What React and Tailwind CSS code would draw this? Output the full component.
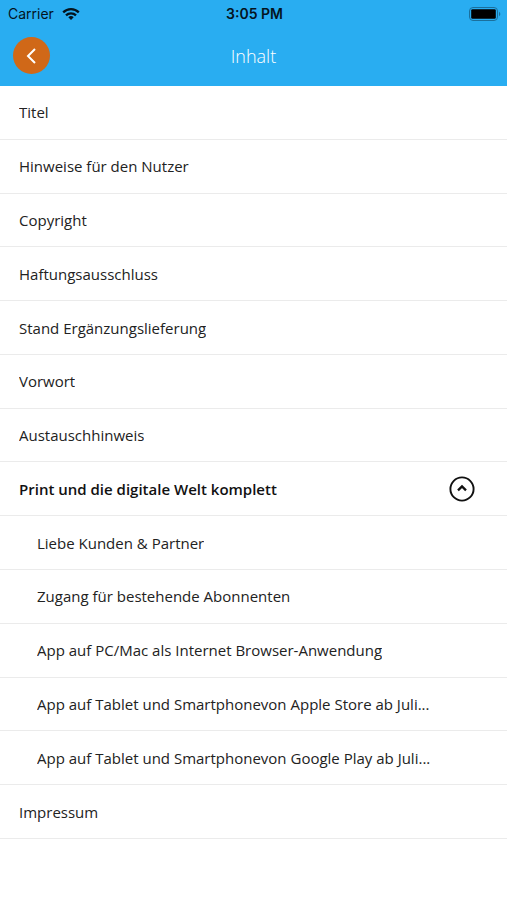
import React, { useState } from "react";

const chapters = [
  { title: "Titel" },
  { title: "Hinweise für den Nutzer" },
  { title: "Copyright" },
  { title: "Haftungsausschluss" },
  { title: "Stand Ergänzungslieferung" },
  { title: "Vorwort" },
  { title: "Austauschhinweis" },
  {
    title: "Print und die digitale Welt komplett",
    children: [
      "Liebe Kunden & Partner",
      "Zugang für bestehende Abonnenten",
      "App auf PC/Mac als Internet Browser-Anwendung",
      "App auf Tablet und Smartphonevon Apple Store ab Juli...",
      "App auf Tablet und Smartphonevon Google Play ab Juli...",
    ],
  },
  { title: "Impressum" },
];

function WifiIcon() {
  return (
    <svg className="h-3 w-[18px]" viewBox="0 0 18 12" aria-hidden="true" fill="none" stroke="#04141e" strokeWidth="2.3">
      <path d="M1.2 4.4a11.1 11.1 0 0 1 15.6 0" />
      <path d="M4 7.4a7.1 7.1 0 0 1 10 0" />
      <path d="M9 12 6.3 9.3a3.8 3.8 0 0 1 5.4 0z" fill="#04141e" stroke="none" />
    </svg>
  );
}

function BatteryIcon() {
  return (
    <svg className="h-[14px] w-8" viewBox="0 0 32 14" aria-hidden="true">
      <rect x="0.5" y="0.5" width="28" height="13" rx="3.5" fill="none" stroke="#1b6f9c" />
      <rect x="2.2" y="2.2" width="24.6" height="9.6" rx="1.4" fill="#000" />
      <path d="M30 4.8c1.8.8 1.8 3.6 0 4.4z" fill="#1b6f9c" />
    </svg>
  );
}

function StatusBar() {
  return (
    <div className="grid h-7 grid-cols-[1fr_auto_1fr] items-center pr-[6px] pl-2 font-['Inter','Liberation_Sans',sans-serif] text-sm text-[#04141e]">
      <div className="flex items-center gap-2">
        <span>Carrier</span>
        <WifiIcon />
      </div>
      <span className="font-semibold">3:05 PM</span>
      <div className="flex justify-end">
        <BatteryIcon />
      </div>
    </div>
  );
}

function Row({ title, nested }) {
  return (
    <li className="flex border-b border-[#ebebeb]">
      <a href="#" className={`flex min-w-0 flex-1 items-center pr-8 ${nested ? "pl-[37px]" : "pl-[19px]"}`}>
        <span className="truncate">{title}</span>
      </a>
    </li>
  );
}

function GroupRow({ title, open, onToggle }) {
  return (
    <li className="flex border-b border-[#ebebeb]">
      <button
        type="button"
        aria-expanded={open}
        onClick={onToggle}
        className="flex min-w-0 flex-1 items-center justify-between pr-8 pl-[19px] text-left font-semibold text-[#111111]"
      >
        <span className="truncate">{title}</span>
        <svg
          className={`size-[26px] shrink-0 ${open ? "" : "rotate-180"}`}
          viewBox="0 0 26 26"
          aria-hidden="true"
          fill="none"
          stroke="#111111"
        >
          <circle cx="13" cy="13" r="11.6" strokeWidth="1.9" />
          <path d="m9 14.4 4-4 4 4" strokeWidth="2.3" />
        </svg>
      </button>
    </li>
  );
}

export default function App() {
  const [open, setOpen] = useState(true);

  return (
    <div className="min-h-screen bg-white font-['Open_Sans','Noto_Sans',sans-serif]">
      <header className="bg-[#29adf1] pb-3">
        <StatusBar />
        <div className="grid grid-cols-[1fr_auto_1fr] items-center px-[13px] pt-[9px]">
          <button
            type="button"
            aria-label="Zurück"
            className="flex size-[37px] items-center justify-center rounded-full bg-[#d06818] pr-[2px]"
          >
            <svg className="h-4 w-[10px]" viewBox="0 0 10 16" aria-hidden="true" fill="none" stroke="#fff" strokeWidth="2">
              <path d="M9 1 2 8l7 7" />
            </svg>
          </button>
          <h1 className="text-lg font-light text-white">Inhalt</h1>
        </div>
      </header>
      <ul className={`grid auto-rows-fr text-[15px] leading-6 text-[#222222] ${open ? "min-h-[753px]" : ""}`}>
        {chapters.map((chapter) =>
          chapter.children ? (
            <React.Fragment key={chapter.title}>
              <GroupRow title={chapter.title} open={open} onToggle={() => setOpen(!open)} />
              {open && chapter.children.map((title) => <Row key={title} title={title} nested />)}
            </React.Fragment>
          ) : (
            <Row key={chapter.title} title={chapter.title} />
          ),
        )}
      </ul>
    </div>
  );
}
